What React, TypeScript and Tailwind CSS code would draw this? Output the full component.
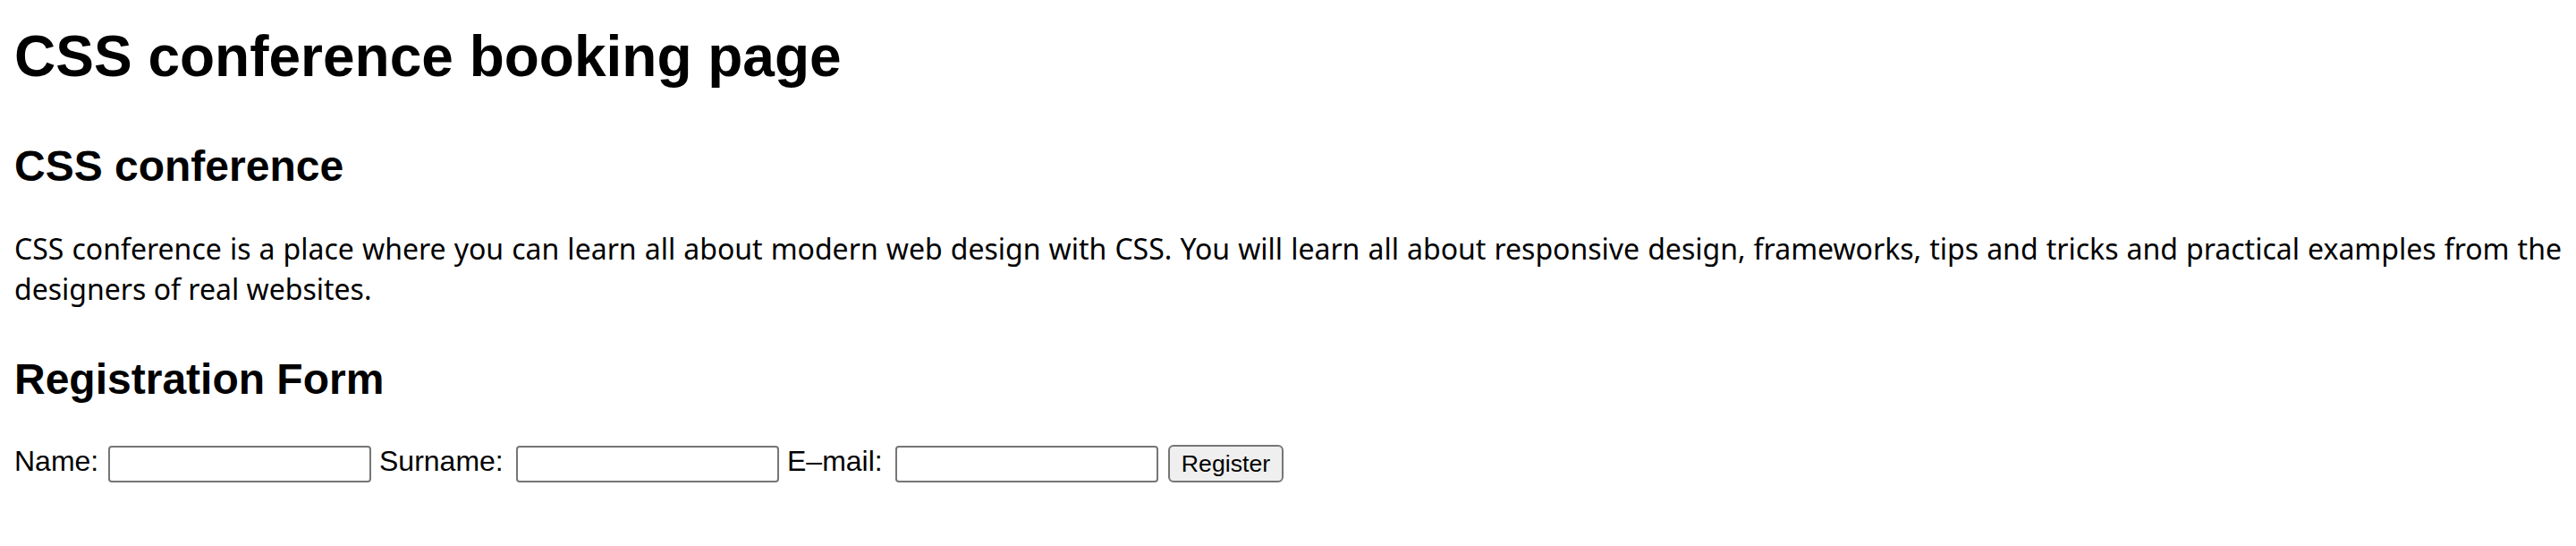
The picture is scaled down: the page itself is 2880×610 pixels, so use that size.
export default function App() {
  return (
    <div className="min-h-[610px] bg-white px-4 pt-[26px] text-black font-['Liberation_Sans',Arial,sans-serif]">
      <h1 className="text-[64px] font-bold leading-[74px]">CSS conference booking page</h1>
      <h2 className="mt-[58px] text-[48px] font-bold leading-[55px]">CSS conference</h2>
      <p className="mt-[42px] text-justify font-['Noto_Sans',sans-serif] text-[32px] leading-[45px]">
        CSS conference is a place where you can learn all about modern web design with CSS. You will learn all
        about responsive design, frameworks, tips and tricks and practical examples from the designers of real
        websites.
      </p>
      <h2 className="mt-[51px] text-[48px] font-bold leading-[55px]">Registration Form</h2>
      <form className="mt-[46px] flex h-[42px] items-center text-[32px]" onSubmit={(e) => e.preventDefault()}>
        <label className="w-[105px] pb-[5px] leading-[37px]">Name:</label>
        <input type="text" className="h-[41px] w-[294px] rounded-[4px] border-2 border-[#767676] bg-white" />
        <label className="ml-[9px] w-[153px] pb-[5px] leading-[37px]">Surname:</label>
        <input type="text" className="h-[41px] w-[294px] rounded-[4px] border-2 border-[#767676] bg-white" />
        <label className="ml-[9px] w-[121px] pb-[5px] leading-[37px]">E–mail:</label>
        <input type="email" className="h-[41px] w-[294px] rounded-[4px] border-2 border-[#767676] bg-white" />
        <button
          type="submit"
          className="ml-[11px] h-[42px] w-[129px] rounded-[6px] border-2 border-[#767676] bg-[#efefef] text-[26.67px] leading-[30px]"
        >
          Register
        </button>
      </form>
    </div>
  );
}
